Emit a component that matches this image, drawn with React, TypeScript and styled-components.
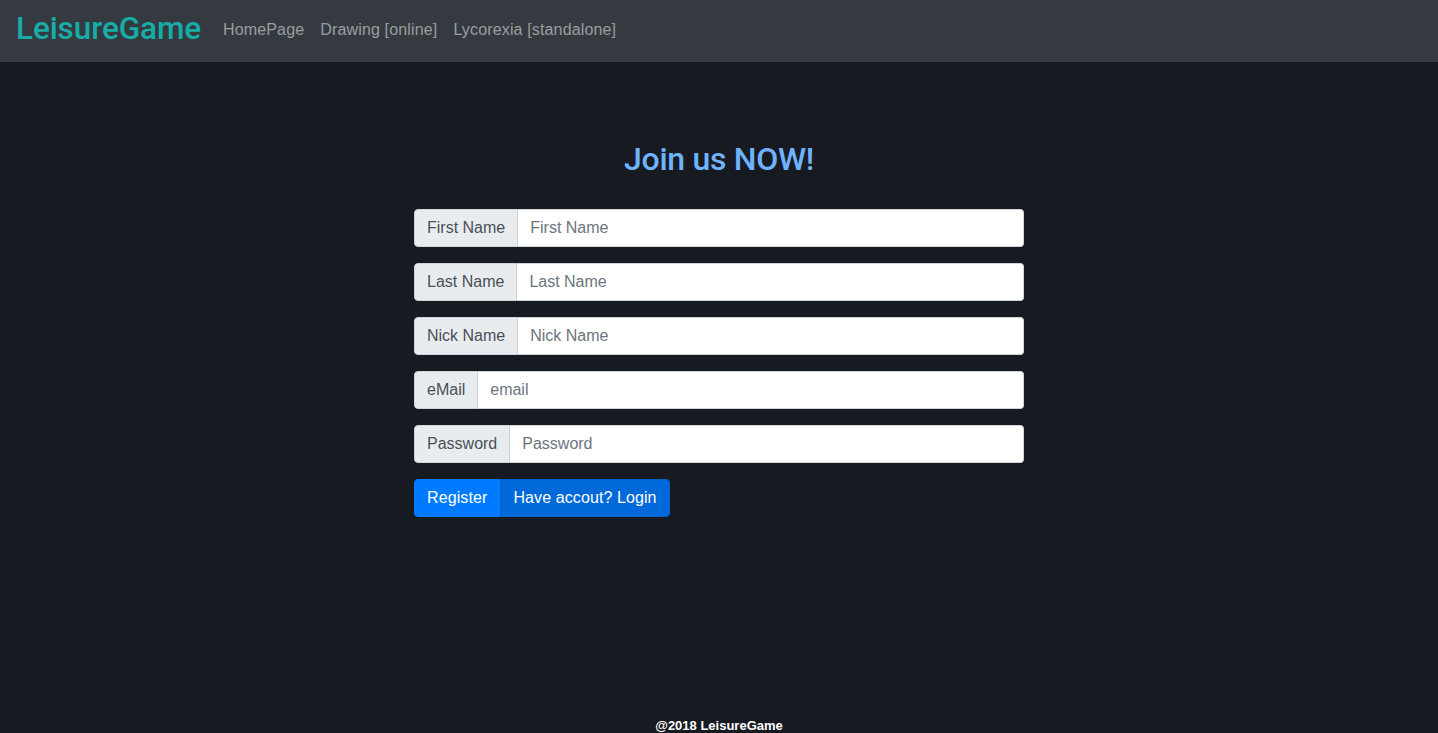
import React from "react";
import styled, { createGlobalStyle } from "styled-components";

const Global = createGlobalStyle`
  html, body { margin: 0; padding: 0; }
  body {
    background: #171a21;
    font-family: "Liberation Sans", Arial, sans-serif;
    font-size: 16px;
    line-height: 1.5;
    color: #212529;
  }
  * { box-sizing: border-box; }
`;

const Page = styled.div`
  min-height: 733px;
  display: flex;
  flex-direction: column;
`;

const Navbar = styled.nav`
  height: 62px;
  background: #343a40;
  display: flex;
  align-items: center;
  padding: 0 16px;
`;

const Brand = styled.a`
  font-family: Roboto, "Liberation Sans", sans-serif;
  font-weight: 500;
  font-size: 31.5px;
  color: #17aca6;
  margin-right: 14px;
  line-height: 1;
  text-decoration: none;
  padding-bottom: 4px;
  letter-spacing: -0.1px;
`;

const NavLinks = styled.div`
  display: flex;
`;

const NavLink = styled.a`
  color: rgba(255, 255, 255, 0.5);
  padding: 0 8px;
  font-size: 16px;
  letter-spacing: 0.15px;
  text-decoration: none;
  padding-bottom: 2px;
`;

const Main = styled.main`
  flex: 1;
  display: flex;
  flex-direction: column;
  align-items: center;
  padding-top: 78px;
`;

const Title = styled.h2`
  margin: 0 0 31px;
  font-family: Roboto, "Liberation Sans", sans-serif;
  font-size: 32px;
  font-weight: 500;
  line-height: 1.2;
  color: #6fb3ff;
  letter-spacing: -0.3px;
`;

const Form = styled.form`
  width: 610px;
  display: flex;
  flex-direction: column;
  gap: 16px;
`;

const InputGroup = styled.div`
  display: flex;
  height: 38px;
`;

const Addon = styled.span`
  display: flex;
  align-items: center;
  padding: 0 12px;
  background: #e9ecef;
  border: 1px solid #ced4da;
  border-radius: 4px 0 0 4px;
  color: #495057;
  font-size: 16px;
  white-space: nowrap;
`;

const Input = styled.input`
  flex: 1;
  min-width: 0;
  border: 1px solid #ced4da;
  border-left: none;
  border-radius: 0 4px 4px 0;
  padding: 0 12px;
  font-family: "Liberation Sans", Arial, sans-serif;
  font-size: 16px;
  color: #495057;
  background: #fff;
  outline: none;
  &::placeholder { color: #6c757d; }
`;

const ButtonRow = styled.div`
  display: flex;
`;

const Button = styled.button<{ $dark?: boolean; $pos: "left" | "right" }>`
  height: 38px;
  padding: 0 12px;
  border: 1px solid ${(p) => (p.$dark ? "#0062cc" : "#007bff")};
  background: ${(p) => (p.$dark ? "#0069d9" : "#007bff")};
  color: #fff;
  font-family: "Liberation Sans", Arial, sans-serif;
  font-size: 16px;
  letter-spacing: 0.1px;
  border-radius: ${(p) => (p.$pos === "left" ? "4px 0 0 4px" : "0 4px 4px 0")};
  cursor: pointer;
`;

const Footer = styled.footer`
  text-align: center;
  color: #fff;
  font-weight: bold;
  font-size: 13px;
  line-height: 1;
  padding-bottom: 1px;
`;

const fields = [
  { label: "First Name", placeholder: "First Name", type: "text" },
  { label: "Last Name", placeholder: "Last Name", type: "text" },
  { label: "Nick Name", placeholder: "Nick Name", type: "text" },
  { label: "eMail", placeholder: "email", type: "email" },
  { label: "Password", placeholder: "Password", type: "password" },
];

export default function App() {
  return (
    <Page>
      <Global />
      <Navbar>
        <Brand href="#">LeisureGame</Brand>
        <NavLinks>
          <NavLink href="#">HomePage</NavLink>
          <NavLink href="#">Drawing [online]</NavLink>
          <NavLink href="#">Lycorexia [standalone]</NavLink>
        </NavLinks>
      </Navbar>
      <Main>
        <Title>Join us NOW!</Title>
        <Form onSubmit={(e) => e.preventDefault()}>
          {fields.map((f) => (
            <InputGroup key={f.label}>
              <Addon>{f.label}</Addon>
              <Input type={f.type} placeholder={f.placeholder} />
            </InputGroup>
          ))}
          <ButtonRow>
            <Button type="submit" $pos="left">Register</Button>
            <Button type="button" $dark $pos="right">Have accout? Login</Button>
          </ButtonRow>
        </Form>
      </Main>
      <Footer>@2018 LeisureGame</Footer>
    </Page>
  );
}
